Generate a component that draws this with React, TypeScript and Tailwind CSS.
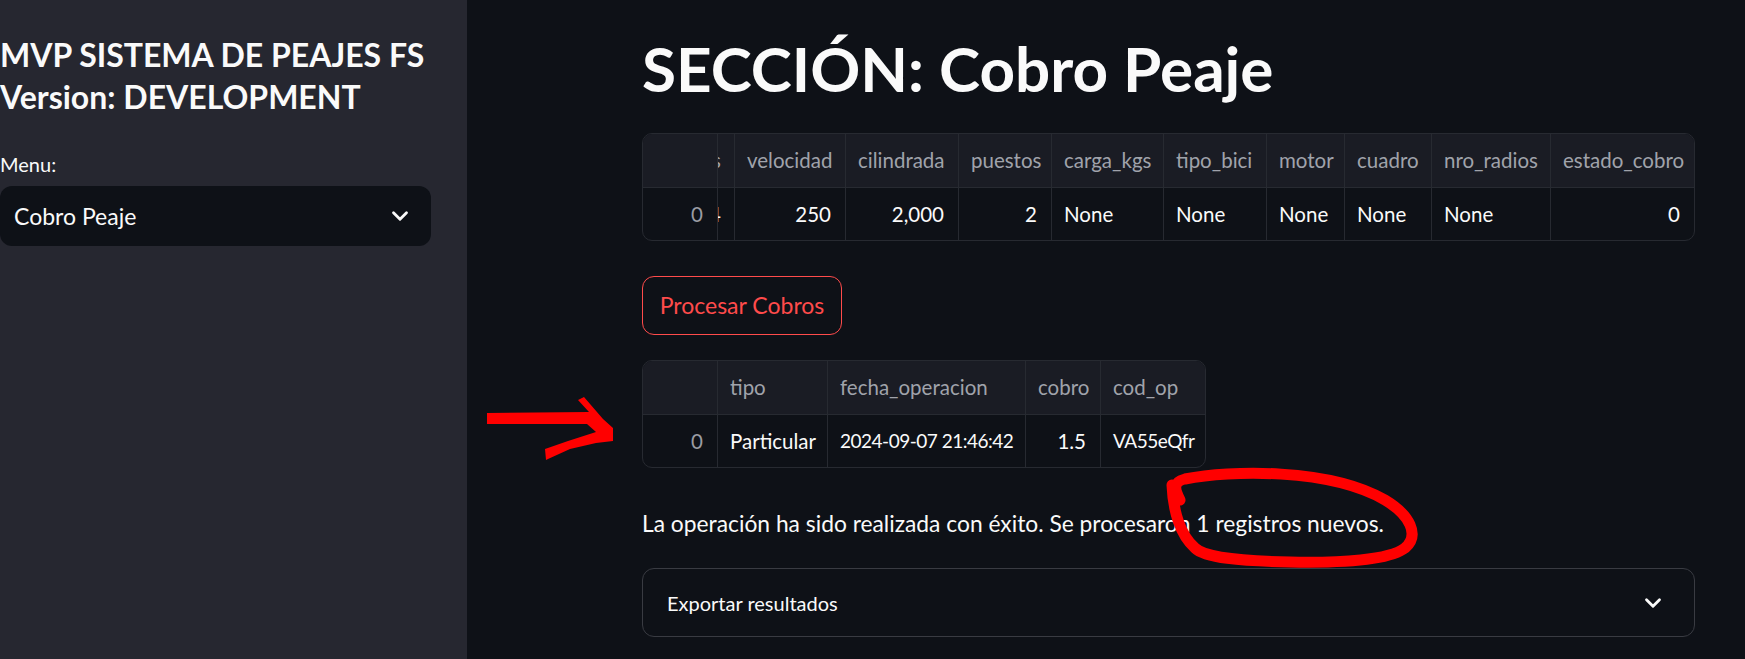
import { ChevronDown } from "lucide-react";

const cols1 = [
  { h: "velocidad", v: "250", num: true },
  { h: "cilindrada", v: "2,000", num: true },
  { h: "puestos", v: "2", num: true },
  { h: "carga_kgs", v: "None" },
  { h: "tipo_bici", v: "None" },
  { h: "motor", v: "None" },
  { h: "cuadro", v: "None" },
  { h: "nro_radios", v: "None" },
  { h: "estado_cobro", v: "0", num: true },
];

const cols2 = [
  { h: "tipo", v: "Particular" },
  { h: "fecha_operacion", v: "2024-09-07 21:46:42", tight: true },
  { h: "cobro", v: "1.5", num: true },
  { h: "cod_op", v: "VA55eQfr", tight: true },
];

function HeadCell({ text }: { text: string }) {
  return (
    <div className="flex h-[53px] items-center overflow-hidden whitespace-nowrap border-r border-[#272a31] bg-[#1a1c24] px-[12px] text-[#a0a3ab] last:border-r-0">
      {text}
    </div>
  );
}

function BodyCell({ text, num, tight }: { text: string; num?: boolean; tight?: boolean }) {
  return (
    <div
      className={
        "flex h-[52px] items-center overflow-hidden whitespace-nowrap border-r border-[#272a31] px-[12px] text-[#fafafa] last:border-r-0 " +
        (num ? "justify-end pr-[14px] " : "justify-start ") +
        (tight ? "text-[19px] tracking-[-0.5px]" : "")
      }
    >
      {text}
    </div>
  );
}

export default function App() {
  return (
    <div className="relative flex h-[659px] w-full overflow-hidden bg-[#0e1117] font-['Lato',sans-serif]">
      {/* sidebar */}
      <aside className="w-[467px] shrink-0 bg-[#262730] pt-[34px]">
        <h2 className="text-[32px] font-bold leading-[42px] text-[#fafafa]">
          MVP SISTEMA DE PEAJES FS
          <br />
          Version: DEVELOPMENT
        </h2>
        <p className="mt-[34px] text-[20px] leading-[24px] text-[#fafafa]">Menu:</p>
        <div className="mt-[10px] flex h-[60px] w-[431px] items-center justify-between rounded-[12px] bg-[#0e1117] pl-[14px] pr-[18px] text-[23px] text-[#fafafa]">
          <span>Cobro Peaje</span>
          <ChevronDown size={26} strokeWidth={2.6} />
        </div>
      </aside>

      {/* main */}
      <main className="flex-1 pl-[175px] pr-[50px] pt-[30px]">
        <h1 className="h-[77px] text-[62px] font-bold leading-[77px] text-[#fafafa]">SECCIÓN: Cobro Peaje</h1>

        <div className="mt-[26px] overflow-hidden rounded-[10px] border border-[#272a31] text-[20.5px]">
          <div className="grid grid-cols-[75px_17px_111px_113px_93px_112px_103px_78px_87px_119px_1fr] border-b border-[#272a31]">
            <HeadCell text="" />
            <div className="flex h-[53px] items-center justify-end overflow-hidden border-r border-[#272a31] bg-[#1a1c24] pr-[13px] text-[#a0a3ab]">
              <span className="whitespace-nowrap">ruedas</span>
            </div>
            {cols1.map((c) => (
              <HeadCell key={c.h} text={c.h} />
            ))}
          </div>
          <div className="grid grid-cols-[75px_17px_111px_113px_93px_112px_103px_78px_87px_119px_1fr]">
            <div className="flex h-[52px] items-center justify-end border-r border-[#272a31] px-[14px] text-[#9a9ca3]">0</div>
            <div className="flex h-[52px] items-center justify-end overflow-hidden border-r border-[#272a31] pr-[13px] text-[#fafafa]">
              <span className="whitespace-nowrap">4</span>
            </div>
            {cols1.map((c) => (
              <BodyCell key={c.h} text={c.v} num={c.num} />
            ))}
          </div>
        </div>

        <button className="mt-[35px] flex h-[59px] w-[200px] items-center justify-center rounded-[12px] border border-[#ff4b4b] text-[23px] text-[#ff4b4b]">
          Procesar Cobros
        </button>

        <div className="mt-[25px] w-[564px] overflow-hidden rounded-[10px] border border-[#272a31] text-[20.5px]">
          <div className="grid grid-cols-[75px_110px_198px_75px_1fr] border-b border-[#272a31]">
            <HeadCell text="" />
            {cols2.map((c) => (
              <HeadCell key={c.h} text={c.h} />
            ))}
          </div>
          <div className="grid grid-cols-[75px_110px_198px_75px_1fr]">
            <div className="flex h-[52px] items-center justify-end border-r border-[#272a31] px-[14px] text-[#9a9ca3]">0</div>
            {cols2.map((c) => (
              <BodyCell key={c.h} text={c.v} num={c.num} tight={c.tight} />
            ))}
          </div>
        </div>

        <p className="mt-[41px] h-[28px] text-[22.8px] leading-[28px] text-[#fafafa]">
          La operación ha sido realizada con éxito. Se procesaron 1 registros nuevos.
        </p>

        <div className="mt-[31px] flex h-[69px] items-center justify-between rounded-[12px] border border-[#393b42] pl-[24px] pr-[28px] text-[20px] text-[#fafafa]">
          <span>Exportar resultados</span>
          <ChevronDown size={26} strokeWidth={2.6} />
        </div>
      </main>

      {/* hand-drawn annotations */}
      <svg className="pointer-events-none absolute left-0 top-0" width="1745" height="659" viewBox="0 0 1745 659">
        <path
          d="M487 413 L589 412 L578 400 L584 397 L603 419 L613 428 L613 441 L596 443 L570 449 L548 459 L546 460 L545 449 L568 441 L596 432 L587 424 L487 424 Z"
          fill="#ff0000"
        />
        <path
          d="M1180 500 C1175 490 1172 482 1185 479 C1230 470 1330 468 1385 500 C1410 515 1420 535 1405 548 C1390 560 1340 563 1290 562 C1240 561 1205 558 1195 548 C1180 535 1173 510 1172 485"
          fill="none"
          stroke="#ff0000"
          strokeWidth="11"
          strokeLinecap="round"
        />
      </svg>
    </div>
  );
}
